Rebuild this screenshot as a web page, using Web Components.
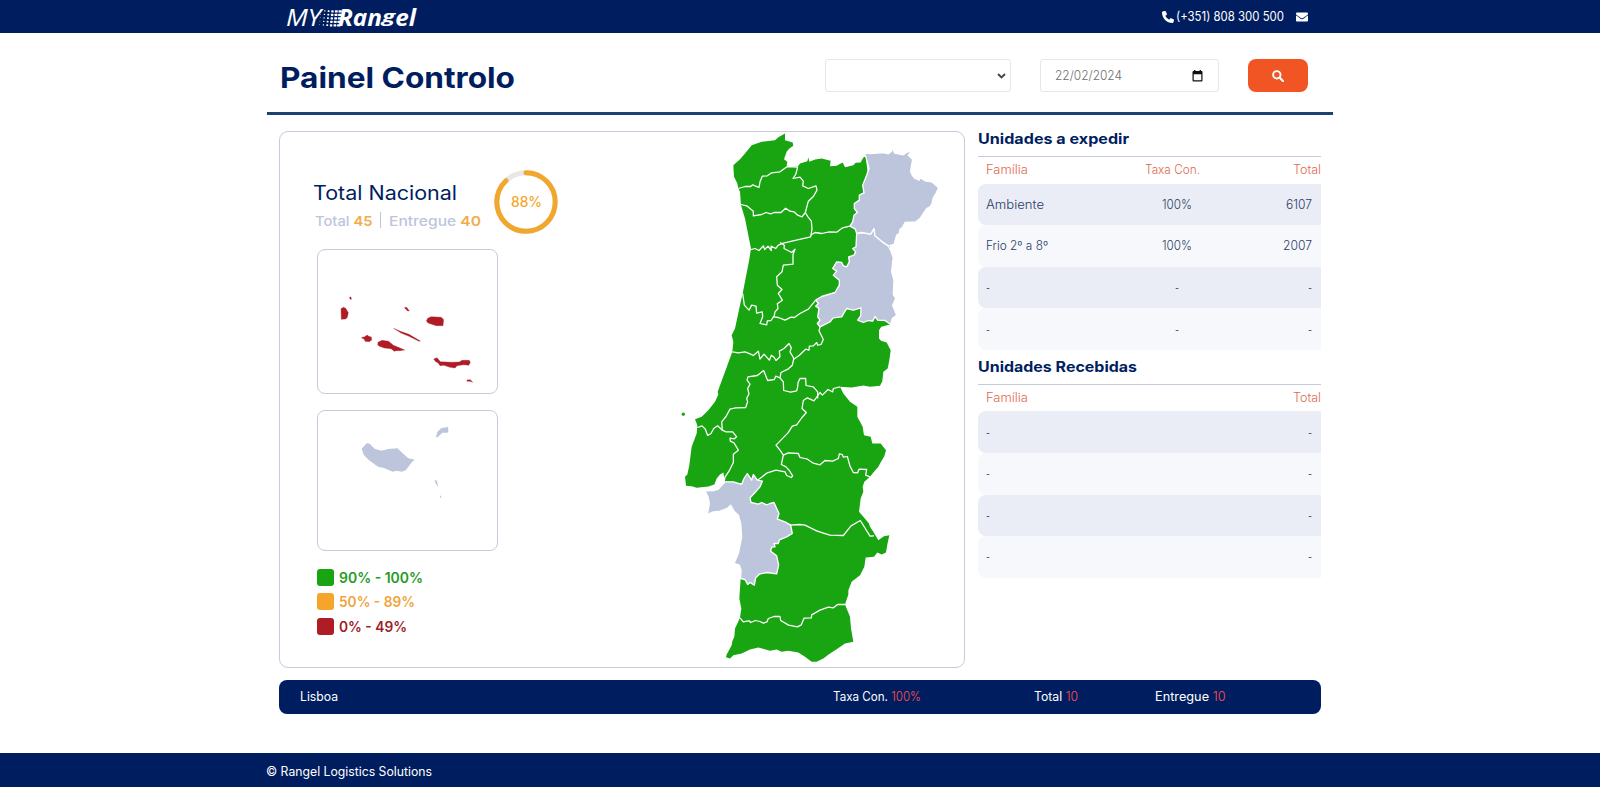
<!DOCTYPE html>
<html lang="pt">
<head>
<meta charset="utf-8">
<title>MY Rangel - Painel Controlo</title>
<style>
body{margin:0;background:#fff;font-family:Inter,"Open Sans",sans-serif;color:#001e5f}
</style>
</head>
<body>
<rangel-app></rangel-app>
<script>
const define=(name,html,setup)=>customElements.define(name,class extends HTMLElement{
  connectedCallback(){
    if(this.shadowRoot)return;
    const root=this.attachShadow({mode:'open'});
    const t=document.createElement('template');
    t.innerHTML=typeof html==='function'?html(this):html;
    root.appendChild(t.content.cloneNode(true));
    if(setup)setup(this,root);
  }
});

/* Text run stretched to a given advance width */
define('fit-text',`<style>:host{display:inline-block;white-space:nowrap;text-align:left;flex:none}span{display:inline-block;transform-origin:0 50%}</style><span><slot></slot></span>`,(el,root)=>{
  const s=root.querySelector('span'),w=+el.getAttribute('w');
  const n=s.getBoundingClientRect().width;
  if(n){el.style.width=w+'px';s.style.transform='scaleX('+w/n+')';}
});

define('rangel-logo',`<style>
:host{display:flex;align-items:center;height:33px;color:#fff;font-family:"Open Sans",sans-serif;font-style:italic;line-height:33px;position:relative;top:1px}
.my{font-size:23px;font-weight:400}.r{font-size:23px;font-weight:700;margin-left:-4px}
.g{display:inline-block;transform:scaleY(.72);transform-origin:0 12px}
svg{width:24px;height:18px;margin-left:-3px}
</style><fit-text class="my" w="35">MY</fit-text><svg viewBox="0 0 24 18" fill="#fff"></svg><fit-text class="r" w="78">Ran<span class="g">g</span>el</fit-text>`,(el,root)=>{
  let s='';
  for(let r=0;r<5;r++)for(let c=0;c<6;c++){const w=.9+c*.48;s+=`<rect x="${2.5+c*3.6-r*.35}" y="${1.2+r*3.5}" width="${w}" height="${Math.min(w,2.3)}" rx=".5"/>`}
  root.querySelector('svg').innerHTML=s;
});

define('top-bar',`<style>
:host{display:block;background:#001e5f;height:33px;color:#fff}
.in{width:1022px;margin:0 auto;height:33px;display:flex;align-items:center;justify-content:space-between}
.c{display:flex;align-items:center;font-size:12.500px;margin-right:3px}
.ph{width:12px;height:12px;margin-right:2px}.em{width:12px;height:12px;margin-left:12px}
rangel-logo{margin-left:-3px}
</style><div class="in"><rangel-logo></rangel-logo><div class="c">
<svg class="ph" viewBox="0 0 512 512" fill="#fff"><path d="M164.900 24.600c-7.700-18.600-28-28.500-47.400-23.200l-88 24C12.100 30.200 0 46 0 64c0 247.400 200.600 448 448 448 18 0 33.800-12.100 38.600-29.500l24-88c5.300-19.400-4.600-39.700-23.200-47.400l-96-40c-16.300-6.800-35.200-2.100-46.300 11.600L304.700 368C234.300 334.700 177.300 277.700 144 207.300l49.300-40.300c13.700-11.200 18.400-30 11.600-46.300l-40-96z"/></svg>
<fit-text w="108">(+351) 808 300 500</fit-text>
<svg class="em" viewBox="0 0 512 512" fill="#fff"><path d="M502 191c4-3 10 0 10 5v204c0 26-22 48-48 48H48c-26 0-48-22-48-48V196c0-5 6-8 10-5 22 17 52 40 154 114 21 15 57 48 92 48 36 0 72-33 93-48 102-74 131-97 153-114zM256 320c23 0 56-29 73-41 133-96 143-105 174-129 6-5 9-12 9-19v-19c0-26-22-48-48-48H48C22 64 0 86 0 112v19c0 7 3 14 9 19 31 24 41 33 174 129 17 12 50 41 73 41z"/></svg>
</div></div>`);

define('filter-bar',`<style>
:host{display:flex;height:79px;width:1029px;margin:0 auto;padding-left:12px;padding-right:25px;border-bottom:3px solid #1d4170;box-sizing:content-box;align-items:flex-start}
h1{margin:26px auto 0 1px;font-size:28.500px;line-height:38px;font-weight:700;height:38px}
.box{box-sizing:border-box;height:33px;border:1px solid #e6e7ea;border-radius:3px;margin-top:26px;display:flex;align-items:center;background:#fff}
.s{width:186px;justify-content:flex-end;padding-right:4px}
.d{width:179px;margin-left:29px;padding:0 15px 0 14px;justify-content:space-between;color:#6d6d6d;font-size:12.500px;font-weight:300}
button{width:60px;height:33px;margin:26px 0 0 29px;border:0;border-radius:8px;background:#f15523;padding:0;display:flex;align-items:center;justify-content:center}
</style><h1><fit-text w="235">Painel Controlo</fit-text></h1>
<div class="box s"><svg width="9" height="6" viewBox="0 0 9 6" fill="none" stroke="#444" stroke-width="1.900"><path d="M1 1l3.500 3.500L8 1"/></svg></div>
<div class="box d"><fit-text w="67">22/02/2024</fit-text><svg width="11" height="12" viewBox="0 0 11 12"><path fill="#111" fill-rule="evenodd" d="M1.500 1H2V0h1.400v1h4.200V0H9v1h.5Q10.500 1 10.500 2v8.500q0 1-1 1h-8q-1 0-1-1V2q0-1 1-1zM1.700 4.200v6.100h7.600V4.200z"/></svg></div>
<button aria-label="Pesquisar"><svg width="12" height="12" viewBox="0 0 12 12" fill="none" stroke="#fff"><circle cx="4.800" cy="4.800" r="3.700" stroke-width="1.900"/><path d="M7.700 7.700l3.300 3.300" stroke-width="2.200" stroke-linecap="round"/></svg></button>`);

define('progress-ring',`<style>:host{display:grid;width:64px;height:64px;place-items:center;color:#f5a62a;font-size:14px;font-weight:500}svg,fit-text{grid-area:1/1}fit-text{position:relative;top:-1px}</style>
<svg width="64" height="64" viewBox="0 0 64 64" fill="none" stroke-width="5"><circle cx="32" cy="32" r="29.200" stroke="#e8e8e8"/><circle cx="32" cy="32" r="29.200" stroke="#f1a72c" pathLength="100" stroke-dasharray="88 100" stroke-linecap="round" transform="rotate(-90 32 32)"/></svg><fit-text w="31"><slot></slot></fit-text>`);

define('island-frame',`<style>:host{display:block;box-sizing:border-box;width:181px;border:1px solid #c6cbdb;border-radius:8px;background:#fff}::slotted(svg){display:block}</style><slot></slot>`);

define('legend-item',el=>`<style>:host{display:flex;align-items:center;height:24.600px;font-size:14px;font-weight:600;color:${el.getAttribute('ink')}}i{width:17px;height:17px;border-radius:3px;background:${el.getAttribute('color')};margin-right:4.500px}</style><i></i><fit-text w="${el.getAttribute('w')}"><slot></slot></fit-text>`);

const braganca='587,93 578,78 583,84 600,85 622,84 640,82 655,86 663,80 668,70 674,84 700,89 706,84 718,78 722,82 715,90 728,103 724,125 722,140 728,152 735,160 748,165 748,157 768,168 785,170 806,188 799,203 790,218 786,235 780,245 770,250 758,268 750,280 738,290 705,292 698,306 690,312 688,325 680,330 672,358 655,362 637,350 615,332 612,310 602,327 575,322 560,325 556,312 540,303 548,290 552,270 562,262 553,250 553,235 568,225 568,210 582,203 578,180 590,150 597,130';
const guarda='560,325 575,322 602,327 612,310 615,332 637,350 655,362 663,378 670,398 668,410 665,440 672,465 670,508 677,520 668,540 680,570 667,580 662,598 645,586 623,585 615,574 608,588 595,586 580,592 563,585 572,572 573,548 550,555 530,550 515,575 490,578 480,590 450,605 442,595 450,585 443,575 447,550 437,543 445,535 437,525 455,514 495,502 508,480 508,465 490,450 500,438 488,430 500,410 515,412 520,422 530,425 538,410 536,395 552,390 557,380 548,370 558,365';
const setubal='212,1360 225,1363 233,1378 240,1372 253,1380 257,1358 268,1347 290,1342 320,1346 326,1320 320,1292 302,1278 305,1266 315,1265 312,1255 325,1255 328,1244 350,1235 367,1225 362,1200 345,1190 322,1182 327,1165 320,1150 312,1132 300,1135 290,1139 275,1132 265,1137 243,1132 240,1118 255,1102 270,1085 277,1068 262,1065 250,1048 245,1065 232,1045 222,1060 215,1077 205,1075 190,1070 165,1070 145,1092 130,1096 105,1097 114,1115 118,1135 112,1168 130,1160 150,1158 172,1150 182,1140 192,1158 205,1170 212,1195 215,1235 205,1285 192,1315 208,1320 213,1335';
const main='345,25 345,45 368,52 370,62 358,70 350,80 342,102 352,110 350,122 383,125 390,115 412,108 415,97 418,110 435,103 455,100 482,107 480,123 500,122 518,112 525,126 550,120 557,113 572,112 580,97 587,93 600,200 660,350 660,598 634,605 627,615 627,640 633,647 650,652 662,675 658,705 653,730 640,740 637,768 630,782 600,785 580,781 545,787 510,785 520,805 540,830 562,845 562,875 578,905 582,930 602,935 607,955 632,955 648,975 643,993 633,1010 625,1025 610,1042 600,1055 583,1070 578,1085 580,1100 572,1120 567,1160 580,1175 597,1195 600,1205 610,1220 625,1245 642,1233 658,1230 652,1258 648,1282 635,1288 622,1282 612,1295 587,1297 583,1325 570,1350 545,1370 535,1395 535,1408 525,1438 540,1475 543,1510 550,1550 525,1555 500,1572 480,1585 460,1600 440,1610 425,1610 405,1595 385,1582 355,1577 335,1580 320,1573 300,1577 265,1567 240,1573 215,1585 190,1590 180,1600 168,1596 170,1588 185,1560 187,1548 193,1535 195,1510 210,1478 214,1450 208,1420 212,1360 226,1340 226,1075 165,1070 160,1042 150,1048 140,1060 133,1078 115,1084 80,1088 65,1083 48,1082 45,1055 52,1048 58,1020 62,988 65,965 80,925 82,900 75,882 95,875 115,855 135,830 145,808 143,800 165,740 187,680 190,650 185,630 195,610 210,540 218,505 238,402 243,370 235,330 225,280 213,240 210,200 205,190 202,175 192,155 190,120 210,102 225,85 245,60 275,50 315,45 325,36';
const borders=[
'205,190 225,184 242,184 248,179 257,183 267,187 270,170 277,153 292,152 305,143 330,140 352,124 383,126',
'383,126 377,148 369,160 390,156 400,168 398,182 415,190 438,182 441,195 430,214 415,228 406,262 396,275 383,270 372,260 360,258 347,249 333,262 312,262 302,266 288,262 275,268 250,272 250,258 230,242 213,238',
'406,262 414,275 424,288 426,312 422,335 392,342 340,354 325,360 317,370 303,363 304,376 294,363 284,373 280,362 267,376 255,370 243,373',
'422,330 435,322 455,325 478,320 500,321 518,308 542,302',
'330,352 343,360 342,370 365,382 375,372 369,388 369,417 340,420 336,440 320,455 322,480 336,493 325,505 337,525 322,536 324,550 315,560 312,575 325,577 345,585 363,576 373,577 390,565 415,552 437,525',
'218,505 223,540 237,555 245,540 258,543 260,564 277,560 278,575 270,595 290,599 292,587 303,586 312,573',
'450,605 447,617 460,643 453,658 443,660 440,652 430,662 418,663 417,675 407,672 388,690 371,702',
'187,680 205,683 225,680 240,686 250,691 265,678 270,702 282,687 298,705 304,690 312,696 318,706 330,695 328,678 342,670 357,655 364,668 360,680 370,697 371,702 367,720 355,731 333,742 330,758 317,753 313,763 293,766 281,736 262,751 234,755 231,765 240,777 233,790 237,806 230,820 233,830 227,847 197,848 180,852 168,874 155,890 157,915',
'330,758 340,770 341,796 362,801 380,797 383,785 384,773 390,760 407,760 408,781 430,785 443,800 443,820',
'510,785 490,790 488,800 474,793 457,810 450,802 432,827 412,818 400,826 396,850 409,862 396,877 380,899 367,903 354,923 318,960 330,975 340,990 334,1018 348,1025 358,1036 368,1052 364,1057 350,1051 345,1040 318,1035 290,1044 275,1056 262,1065',
'340,990 355,983 385,985 390,997 410,1001 430,1014 450,1019 465,1006 488,1008 505,1000 508,986 517,988 520,996 532,994 540,1023 550,1042 563,1043 567,1032 590,1033 587,1050 600,1055',
'82,907 96,902 106,912 113,931 123,925 131,910 143,902 157,915 168,920 188,920 200,935 193,941 180,939 181,948 192,953 205,975 190,987 190,1012 177,1038 165,1056 162,1070',
'360,1200 390,1198 405,1200 440,1217 460,1224 480,1230 520,1231 543,1202 571,1186 600,1233 612,1232',
'210,1478 220,1490 231,1488 238,1487 242,1492 256,1486 270,1489 280,1494 291,1490 295,1480 312,1474 330,1474 332,1486 356,1500 382,1505 394,1499 402,1479 424,1478 425,1469 450,1455 475,1446 490,1448 503,1438 525,1438'];

define('portugal-map',`<style>:host{display:block;width:290px;height:535px}svg{display:block;width:290px;height:536px;overflow:visible}</style>
<svg viewBox="0 20.500 870 1608" preserveAspectRatio="none" stroke-linejoin="round"><polygon points="${main}" fill="#19a412"/>
<g fill="#bdc5dd" stroke="#fff" stroke-width="4"><polygon points="${setubal}"/><polygon points="${guarda}"/><polygon points="${braganca}"/></g>
<g fill="none" stroke="#fff" stroke-width="3.800">${borders.map(b=>`<polyline points="${b}"/>`).join('')}</g>
<circle cx="40" cy="867" r="5" fill="#19a412"/></svg>`);

define('national-panel',`<style>
:host{box-sizing:border-box;display:flex;width:686px;height:537px;border:1px solid #c6cbdb;border-radius:9px;background:#fff}
.l{width:390px;padding:38px 0 0 33px;box-sizing:border-box}
.h{display:flex;height:64px;width:245px;justify-content:space-between}
.t{font-size:19.500px;line-height:26px;font-weight:400;margin-top:10px;height:26px}
.s{display:flex;align-items:center;font-size:13.500px;font-weight:500;color:#bdc5dd;height:20px;margin-top:5px;margin-left:1.500px}
b{font-weight:600;color:#f3ab4a}.v{width:1px;height:16px;background:#bdc5dd;margin:-2px 8px 0 8px}
island-frame{margin-left:4px}.a{margin-top:15px;height:145px}.m{margin-top:16px;height:141px}
.g{margin:14px 0 0 4px}
portugal-map{margin:0}
</style><div class="l"><div class="h"><div><div class="t"><fit-text w="144">Total Nacional</fit-text></div>
<div class="s"><fit-text w="57.500">Total <b>45</b></fit-text><span class="v"></span><fit-text w="92">Entregue <b>40</b></fit-text></div></div><progress-ring>88%</progress-ring></div>
<island-frame class="a"><svg width="179" height="143" viewBox="145 376 537 429" fill="#b01c26" stroke="#b01c26" stroke-linejoin="round"><path d="M214 552L221 548 228 551 236 564 233 578 228 583 215 584ZM240 517l4 0 1 7-4 0ZM404 549l7-1 8 11-5 0ZM372 611l20 9 26 9 34 20-4 1-30-15-24-10ZM475 580l10-4 30 2 7 7-2 18-20 0-25-8-5-7ZM275 639l10-3 8-5 4 4 8 2 1 9-7 5-13-1-2-6ZM325 653l12-6 20 3 14 12 15 6 19 8-15 2-10 0-6 2-10-8-20-2-15-5-5-5ZM492 703l10-4 10 12 35 2 22-1 8-5 22 0 3 7-5 8-15-2-20 3-6 7-15-2-18-6-12 1-6-9-7-3ZM592 766l10-1 7 8-8-3-9 0Z"/></svg></island-frame>
<island-frame class="m"><svg width="179" height="139" viewBox="145 33 537 417" fill="#bdc5dd"><path d="M276 146l16-17 8 2 16 16 20 5 20-5 27-2 16 15 17 15 20 4-9 7-19 25-12 4-15-3-12 3-26-11-18-4-27-19-16-17ZM499 112l4-16 12-12 20-3 1 14-3 3-15 0-14 14ZM494 239l8 4 4 19-8-12ZM511 285l5 8-5 0Z"/></svg></island-frame>
<div class="g"><legend-item color="#19a412" ink="#269a25" w="84">90% - 100%</legend-item><legend-item color="#f5a62a" ink="#f1a43c" w="76">50% - 89%</legend-item><legend-item color="#b01c26" ink="#9f2026" w="68">0% - 49%</legend-item></div></div>
<portugal-map></portugal-map>`);

define('units-table',el=>{
  const rows=JSON.parse(el.getAttribute('rows')),three=el.hasAttribute('rate');
  const W={Ambiente:58,'Frio 2º a 8º':62,'100%':30,'6107':26,'2007':29,'-':4};
  const cell=x=>`<fit-text w="${W[x]}">${x}</fit-text>`;
  return `<style>
:host{display:block;width:343.500px;color:#2c3c65;font-size:12.500px;font-weight:300}
h2{margin:0;height:25px;line-height:16px;font-size:14.500px;font-weight:700;color:#001e5f;border-bottom:1px solid #c6cbdb}
.r{display:grid;grid-template-columns:146px 90px 1fr;align-items:center;height:41.600px;padding:0 9px 0 8.500px;border-radius:8px 0 0 8px;background:#f6f8fc;box-sizing:border-box}
.r.k{background:#eaedf5}
.r>:nth-child(2){justify-self:center}.r>:last-child{justify-self:end}
.r.h{background:none;color:#e06a50;height:26.500px;padding-right:0;padding-bottom:2px}
.r.h>:nth-child(2){margin-left:-10px}
</style><h2><fit-text w="${el.getAttribute('tw')}">${el.getAttribute('heading')}</fit-text></h2>
<div class="r h"><fit-text w="42">Família</fit-text>${three?'<fit-text w="55">Taxa Con.</fit-text>':'<span></span>'}<fit-text w="28">Total</fit-text></div>
${rows.map((r,i)=>`<div class="r${i%2?'':' k'}">${cell(r[0])}${r.length>2?cell(r[1]):'<span></span>'}${cell(r[r.length-1])}</div>`).join('')}`;
});

define('district-bar',`<style>:host{display:grid;grid-template-columns:533px 201px 121px 1fr;align-items:center;box-sizing:border-box;width:1042px;height:33.500px;border-radius:8px;background:#001e5f;color:#fff;font-size:12.500px;padding:0 0 1px 21px;margin-top:12px}b{font-weight:300;color:#ff5149}</style>
<fit-text w="38">Lisboa</fit-text><fit-text w="88">Taxa Con. <b>100%</b></fit-text><fit-text w="44">Total <b>10</b></fit-text><fit-text w="70.500">Entregue <b>10</b></fit-text>`);

define('page-footer',`<style>:host{display:flex;align-items:center;background:#001e5f;color:#fff;height:31px;padding:3px 0 0 266px;font-size:12.500px;box-sizing:content-box}</style><fit-text w="166">© Rangel Logistics Solutions</fit-text>`);

define('rangel-app',`<style>
:host{display:flex;flex-direction:column;height:787px;overflow:hidden}
main{width:1042px;margin:16px auto 0;flex:1}
.cols{display:flex;justify-content:space-between}
units-table+units-table{margin-top:9px}
</style><top-bar></top-bar><filter-bar></filter-bar><main><div class="cols"><national-panel></national-panel><div>
<units-table rate heading="Unidades a expedir" tw="151" rows='[["Ambiente","100%","6107"],["Frio 2º a 8º","100%","2007"],["-","-","-"],["-","-","-"]]'></units-table>
<units-table heading="Unidades Recebidas" tw="159" rows='[["-","-"],["-","-"],["-","-"],["-","-"]]'></units-table>
</div></div><district-bar></district-bar></main><page-footer></page-footer>`);
</script>
</body>
</html>
